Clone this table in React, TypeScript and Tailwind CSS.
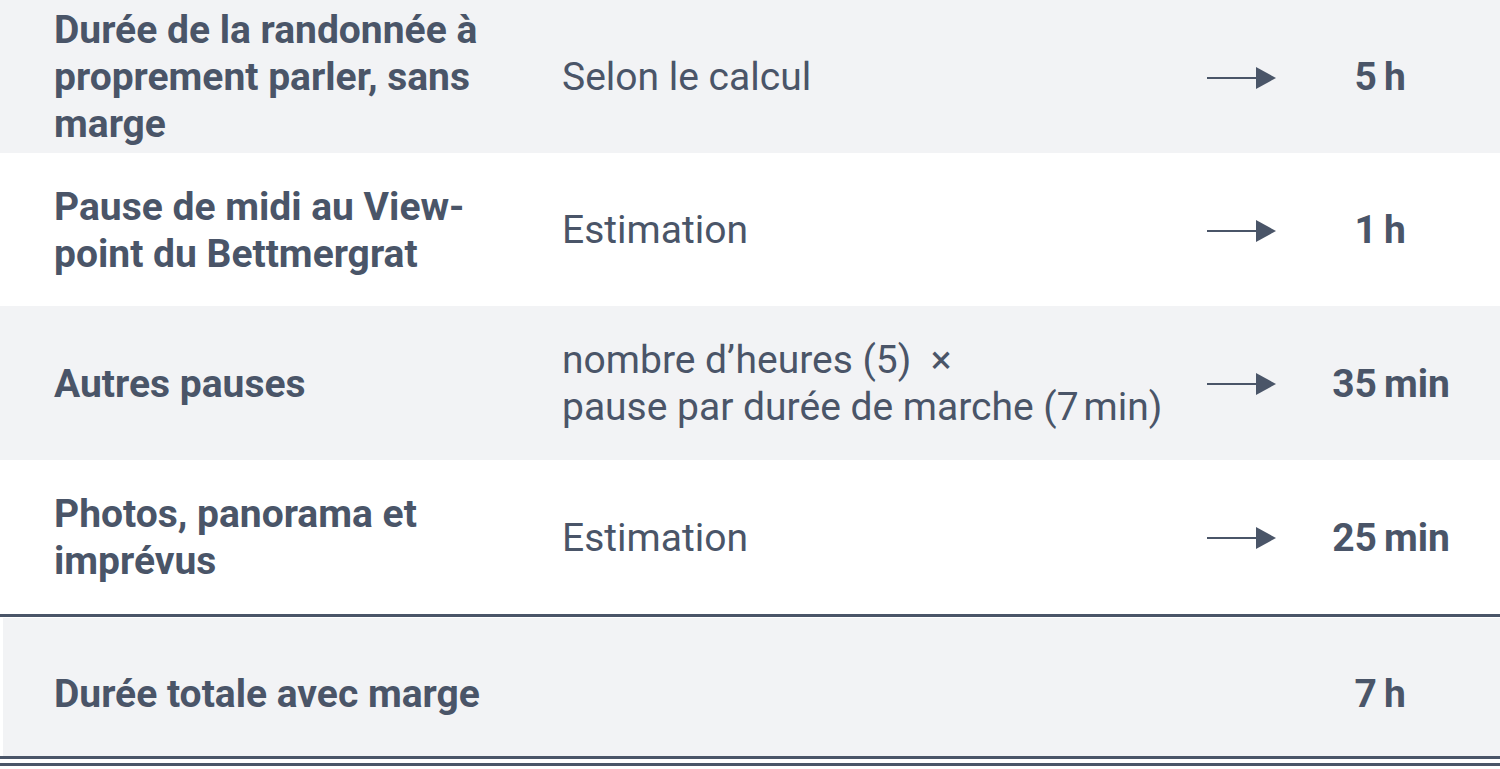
import React from "react";

const Arrow = () => (
  <svg width="69" height="22" viewBox="0 0 69 22" className="block">
    <line x1="0" y1="11" x2="50" y2="11" stroke="#4a5568" strokeWidth="2" />
    <polygon points="49,0 69,11 49,22" fill="#4a5568" />
  </svg>
);

type Row = {
  label: React.ReactNode;
  desc: React.ReactNode;
  num: string;
  unit: string;
  bg: string;
  h: string;
};

const rows: Row[] = [
  {
    label: "Durée de la randonnée à proprement parler, sans marge",
    desc: "Selon le calcul",
    num: "5",
    unit: "h",
    bg: "bg-[#f2f3f5]",
    h: "h-[153px]",
  },
  {
    label: "Pause de midi au View-point du Bettmergrat",
    desc: "Estimation",
    num: "1",
    unit: "h",
    bg: "bg-white",
    h: "h-[153px]",
  },
  {
    label: "Autres pauses",
    desc: (
      <>
        nombre d’heures (5)&nbsp; ×<br />
        pause par durée de marche (7&#8239;min)
      </>
    ),
    num: "35",
    unit: "min",
    bg: "bg-[#f2f3f5]",
    h: "h-[154px]",
  },
  {
    label: "Photos, panorama et imprévus",
    desc: "Estimation",
    num: "25",
    unit: "min",
    bg: "bg-white",
    h: "h-[154px]",
  },
];

const Value = ({ num, unit }: { num: string; unit: string }) => (
  <div className="flex items-baseline font-bold">
    <span className="w-[101px] text-right">{num}</span>
    <span className="ml-[7px]">{unit}</span>
  </div>
);

export default function App() {
  return (
    <div
      className="w-[1500px] h-[769px] bg-white text-[#4a5568] text-[39px] leading-[47px] overflow-hidden"
      style={{ fontFamily: "Roboto, 'Liberation Sans', sans-serif" }}
    >
      {rows.map((r, i) => (
        <div key={i} className={`flex items-center pt-[2px] ${r.bg} ${r.h}`}>
          <div className="w-[562px] pl-[54px] pr-[38px] font-bold">{r.label}</div>
          <div className="flex-1">{r.desc}</div>
          <div className="w-[69px]">
            <Arrow />
          </div>
          <div className="w-[224px]">
            <Value num={r.num} unit={r.unit} />
          </div>
        </div>
      ))}
      <div className="border-t-[3px] border-[#4a5568] pt-px">
        <div className="ml-[3px] h-[138px] bg-[#f2f3f5] flex items-center pt-[14px]">
          <div className="w-[559px] pl-[51px] font-bold">Durée totale avec marge</div>
          <div className="flex-1"></div>
          <div className="w-[224px]">
            <Value num="7" unit="h" />
          </div>
        </div>
        <div className="h-[3px] bg-[#4a5568]"></div>
        <div className="h-[4px]"></div>
        <div className="h-[3px] bg-[#4a5568]"></div>
      </div>
    </div>
  );
}
